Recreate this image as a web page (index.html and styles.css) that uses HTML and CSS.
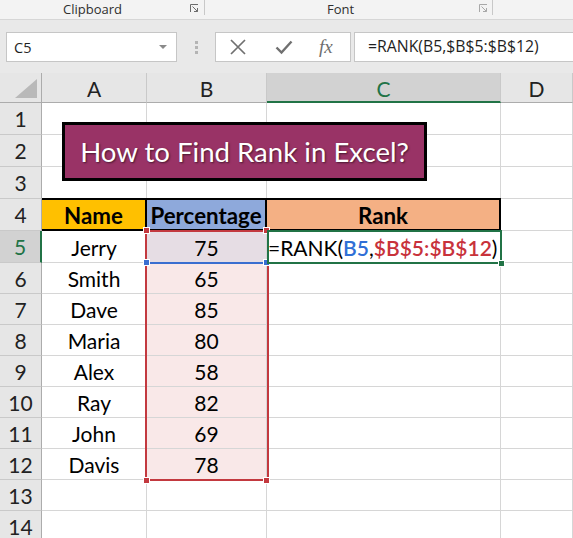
FILE: index.html
```html
<!DOCTYPE html>
<html>
<head>
<meta charset="utf-8">
<link rel="stylesheet" href="styles.css">
</head>
<body>
<div class="ribbon">
  <div class="group group-clip">
    <span class="glabel">Clipboard</span>
    <svg class="launcher" width="9" height="9" viewBox="0 0 9 9"><path d="M0.5 8V0.5H8" fill="none" stroke="#6b6b6b"/><path d="M2.5 2.5L7.5 7.5M4 7.5H7.5V4" fill="none" stroke="#6b6b6b"/></svg>
  </div>
  <div class="group group-font">
    <span class="glabel">Font</span>
    <svg class="launcher light" width="9" height="9" viewBox="0 0 9 9"><path d="M0.5 8V0.5H8" fill="none" stroke="#a8a8a8"/><path d="M2.5 2.5L7.5 7.5M4 7.5H7.5V4" fill="none" stroke="#a8a8a8"/></svg>
  </div>
</div>
<div class="fbar">
  <div class="namebox"><span>C5</span><svg width="8" height="5" viewBox="0 0 8 5"><path d="M0 0H8L4 4z" fill="#8a8a8a"/></svg></div>
  <div class="dots"><i></i><i></i><i></i></div>
  <div class="fbtns">
    <svg width="18" height="16" viewBox="0 0 18 16"><path d="M2 1L16 15M16 1L2 15" stroke="#707070" stroke-width="1.7"/></svg>
    <svg width="18" height="16" viewBox="0 0 18 16"><path d="M1.5 8.5L6.5 13.5L16.5 2.5" fill="none" stroke="#707070" stroke-width="2.4"/></svg>
    <span class="fx">fx</span>
  </div>
  <div class="finput">=RANK(B5,$B$5:$B$12)</div>
</div>
<div class="sheet">
  <div class="hd corner"><svg width="30" height="24" viewBox="0 0 30 24"><path d="M28 3V22H6z" fill="#b9b9b9"/></svg></div>
  <div class="hd col">A</div>
  <div class="hd col">B</div>
  <div class="hd col sel">C</div>
  <div class="hd col">D</div>

  <div class="hd row">1</div><div class="c"></div><div class="c"></div><div class="c"></div><div class="c"></div>
  <div class="hd row">2</div><div class="c"></div><div class="c"></div><div class="c"></div><div class="c"></div>
  <div class="hd row">3</div><div class="c"></div><div class="c"></div><div class="c"></div><div class="c"></div>
  <div class="hd row">4</div><div class="c th th-name">Name</div><div class="c th th-pct">Percentage</div><div class="c th th-rank">Rank</div><div class="c"></div>
  <div class="hd row sel">5</div><div class="c">Jerry</div><div class="c pk cur">75</div><div class="c formula">=RANK(<span class="rb">B5</span>,<span class="rr">$B$5:$B$12</span>)</div><div class="c"></div>
  <div class="hd row">6</div><div class="c">Smith</div><div class="c pk">65</div><div class="c"></div><div class="c"></div>
  <div class="hd row">7</div><div class="c">Dave</div><div class="c pk">85</div><div class="c"></div><div class="c"></div>
  <div class="hd row">8</div><div class="c">Maria</div><div class="c pk">80</div><div class="c"></div><div class="c"></div>
  <div class="hd row">9</div><div class="c">Alex</div><div class="c pk">58</div><div class="c"></div><div class="c"></div>
  <div class="hd row">10</div><div class="c">Ray</div><div class="c pk">82</div><div class="c"></div><div class="c"></div>
  <div class="hd row">11</div><div class="c">John</div><div class="c pk">69</div><div class="c"></div><div class="c"></div>
  <div class="hd row">12</div><div class="c">Davis</div><div class="c pk">78</div><div class="c"></div><div class="c"></div>
  <div class="hd row">13</div><div class="c"></div><div class="c"></div><div class="c"></div><div class="c"></div>
  <div class="hd row">14</div><div class="c"></div><div class="c"></div><div class="c"></div><div class="c"></div>

  <div class="title">How to Find Rank in Excel?</div>
  <div class="range-red"></div>
  <div class="ref-blue"></div>
  <div class="h h-red h1"></div>
  <div class="h h-red h2"></div>
  <div class="h h-red h3"></div>
  <div class="h h-red h4"></div>
  <div class="h h-blue h5"></div>
  <div class="h h-blue h6"></div>
  <div class="active"></div>
  <div class="h h-green h7"></div>
</div>
</body>
</html>
```

FILE: styles.css
```css
html, body {
  margin: 0;
  padding: 0;
  width: 573px;
  height: 538px;
  overflow: hidden;
  background: #ffffff;
  font-family: "Open Sans", "Noto Sans", sans-serif;
}

.ribbon {
  height: 19px;
  background: #f3f3f3;
  border-bottom: 1px solid #d6d6d6;
  display: flex;
  align-items: flex-start;
}
.group {
  position: relative;
  height: 15px;
  border-right: 1px solid #c8c8c8;
  display: flex;
  align-items: flex-start;
}
.group-clip { width: 204px; }
.group-font { width: 287px; }
.glabel {
  font-size: 13px;
  color: #2f2f2f;
  line-height: 18px;
  white-space: nowrap;
}
.group-clip .glabel { margin-left: 63px; }
.group-font .glabel { margin-left: 122px; }
.launcher { position: absolute; top: 4px; }
.group-clip .launcher { left: 190px; }
.group-font .launcher { left: 274px; }

.fbar {
  height: 53px;
  background: #e9e9e9;
  display: flex;
  align-items: flex-start;
  padding-top: 12px;
  box-sizing: border-box;
}
.namebox {
  margin-left: 6px;
  width: 171px;
  height: 30px;
  box-sizing: border-box;
  background: #fff;
  border: 1px solid #c6c6c6;
  display: flex;
  align-items: center;
  justify-content: space-between;
  padding: 0 9px 0 7px;
  font-size: 14.5px;
  color: #1f1f1f;
}
.dots {
  width: 38px;
  height: 30px;
  display: flex;
  flex-direction: column;
  align-items: center;
  justify-content: center;
  gap: 2px;
}
.dots i {
  display: block;
  width: 3px;
  height: 3px;
  background: #b4b4b4;
}
.fbtns {
  width: 136px;
  height: 30px;
  box-sizing: border-box;
  background: #fff;
  border: 1px solid #c6c6c6;
  display: flex;
  align-items: center;
  padding-left: 13px;
  gap: 28px;
}
.fbtns .fx {
  font-family: "Liberation Serif", serif;
  font-style: italic;
  font-size: 19px;
  color: #6e6e6e;
  margin-left: -2px;
}
.finput {
  margin-left: 3px;
  flex: 1;
  height: 30px;
  box-sizing: border-box;
  background: #fff;
  border: 1px solid #c6c6c6;
  border-right: none;
  padding-left: 13px;
  font-size: 15.8px;
  line-height: 27px;
  color: #1f1f1f;
  white-space: nowrap;
}

.sheet {
  position: relative;
  display: grid;
  grid-template-columns: 42px 105px 120px 234px 72px;
  grid-template-rows: 30px 32px 32px 32px 32px 32px 31px 31px 31px 31px 31px 31px 31px 31px 31px;
  font-family: Lato, "Open Sans", sans-serif;
  font-size: 21px;
  color: #000;
}
.hd {
  background: #e6e6e6;
  color: #222;
  display: flex;
  align-items: center;
  justify-content: center;
  box-sizing: border-box;
}
.hd.col {
  border-right: 1px solid #c9c9c9;
  border-bottom: 1px solid #acacac;
  font-size: 21px;
  padding-top: 2px;
}
.hd.corner {
  border-right: 1px solid #acacac;
  border-bottom: 1px solid #acacac;
  align-items: flex-end;
  justify-content: flex-end;
  padding: 0 2px 2px 0;
}
.hd.row {
  border-right: 1px solid #acacac;
  border-bottom: 1px solid #c9c9c9;
  font-size: 21px;
}
.hd.col.sel {
  background: #d2d2d2;
  color: #217346;
  border-bottom: 2px solid #217346;
}
.hd.row.sel {
  background: #d2d2d2;
  color: #217346;
  border-right: 2px solid #217346;
}
.c {
  border-right: 1px solid #d6d6d6;
  border-bottom: 1px solid #d6d6d6;
  box-sizing: border-box;
  display: flex;
  align-items: center;
  justify-content: center;
  white-space: nowrap;
  padding-top: 1px;
}
.th {
  font-weight: bold;
  font-size: 22.3px;
  border-top: 2px solid #000;
  border-bottom: 2px solid #000;
  border-right: 2px solid #000;
  margin-top: -1px;
}
.th-name { background: #ffc000; }
.th-pct { background: #8ea9db; }
.th-rank { background: #f4b084; }
.pk { background: #f9e8e8; }
.pk.cur { background: #e6dde4; }
.formula {
  justify-content: flex-start;
  padding-left: 1px;
  overflow: visible;
}
.rb { color: #2f6fd6; font-weight: 600; }
.rr { color: #c8323b; font-weight: 600; }

.title {
  position: absolute;
  left: 62px;
  top: 49px;
  width: 365px;
  height: 59px;
  box-sizing: border-box;
  border: 3px solid #000;
  background: #993366;
  color: #fff;
  font-size: 27.6px;
  white-space: nowrap;
  display: flex;
  align-items: center;
  justify-content: center;
  text-shadow: 1px 1px 2px rgba(0,0,0,0.55);
}
.range-red {
  position: absolute;
  left: 145px;
  top: 157px;
  width: 124px;
  height: 251px;
  box-sizing: border-box;
  border: 2px solid #c3393f;
}
.ref-blue {
  position: absolute;
  left: 146px;
  top: 189px;
  width: 122px;
  height: 2px;
  background: #3a6ed0;
}
.active {
  position: absolute;
  left: 267px;
  top: 157px;
  width: 235px;
  height: 34px;
  box-sizing: border-box;
  border: 2px solid #217346;
}
.h {
  position: absolute;
  width: 7px;
  height: 7px;
  box-sizing: border-box;
  border: 1px solid #fff;
}
.h-red { background: #c3393f; }
.h-blue { background: #3a6ed0; }
.h-green { background: #217346; }
.h1 { left: 143px; top: 154px; }
.h2 { left: 263px; top: 154px; }
.h3 { left: 143px; top: 404px; }
.h4 { left: 263px; top: 404px; }
.h5 { left: 143px; top: 186px; }
.h6 { left: 263px; top: 186px; }
.h7 { left: 498px; top: 187px; }
```
